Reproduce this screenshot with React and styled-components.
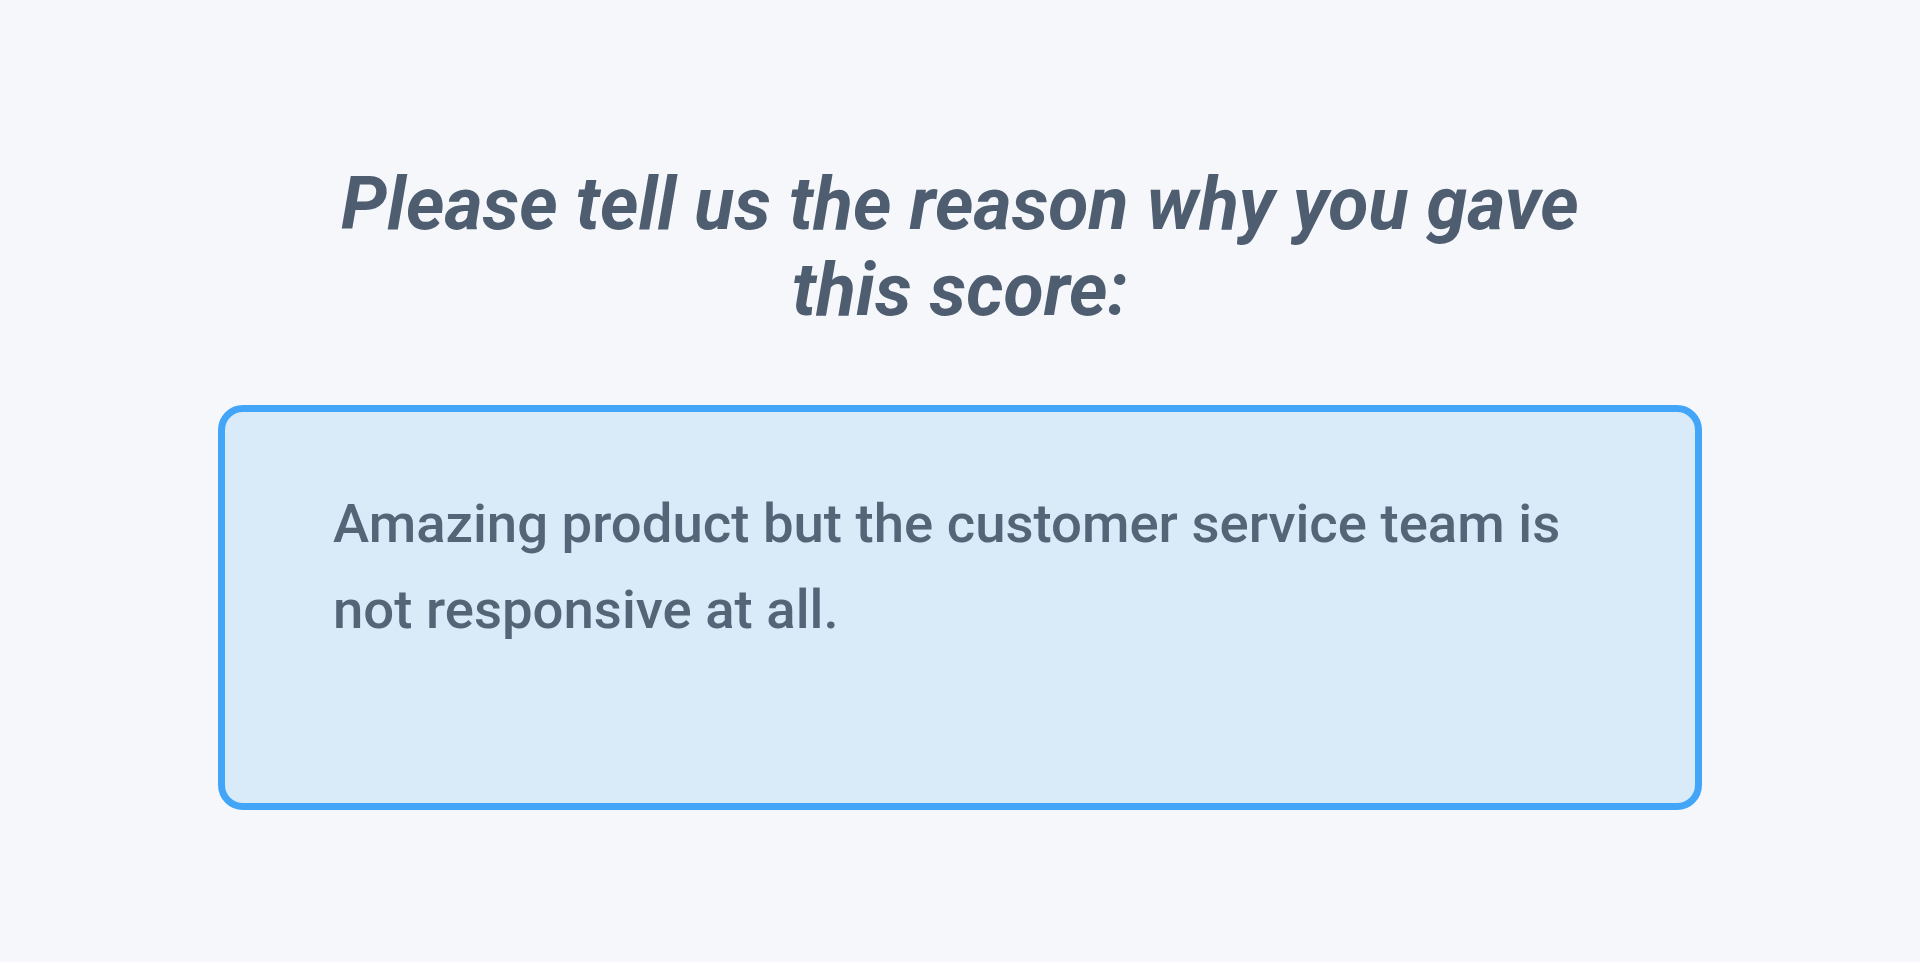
import React from 'react';
import styled, { createGlobalStyle } from "styled-components";

const GlobalStyle = createGlobalStyle`
  html, body {
    margin: 0;
    padding: 0;
    background: #f5f7fb;
  }
  body {
    font-family: Roboto, "Liberation Sans", sans-serif;
  }
`;

const Page = styled.div`
  min-height: 962px;
  box-sizing: border-box;
  padding-top: 161px;
  display: flex;
  flex-direction: column;
  align-items: center;
  background: #f5f7fb;
`;

const Question = styled.h1`
  margin: 0 0 72px;
  max-width: 1320px;
  text-align: center;
  font-family: Roboto, "Liberation Sans", sans-serif;
  font-size: 73.5px;
  line-height: 86px;
  font-weight: 700;
  font-style: italic;
  color: #4e5e70;
`;

const Answer = styled.textarea`
  display: block;
  width: 1484px;
  height: 405px;
  box-sizing: border-box;
  margin: 0;
  padding: 68px 100px 0 108px;
  border: 7px solid #42a5f8;
  border-radius: 25px;
  background: #d9eaf8;
  resize: none;
  outline: none;
  overflow: hidden;
  font-family: Roboto, "Liberation Sans", sans-serif;
  font-size: 54.5px;
  line-height: 86px;
  font-weight: 500;
  color: #536577;
`;

export default () => <>
  <GlobalStyle />
  <Page>
    <Question>Please tell us the reason why you gave this score:</Question>
    <Answer
      defaultValue="Amazing product but the customer service team is not responsive at all."
      spellCheck={false}
    />
  </Page>
</>;
